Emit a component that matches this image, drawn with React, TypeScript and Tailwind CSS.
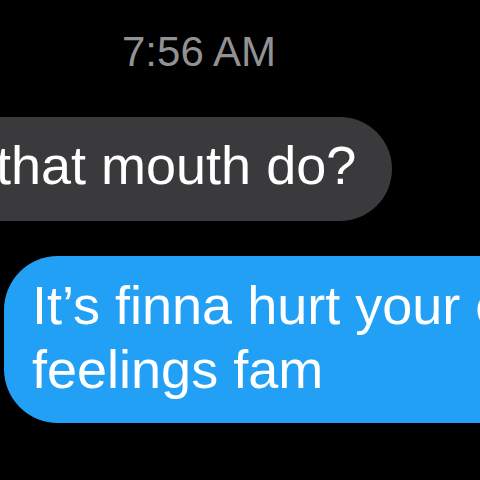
export default function App() {
  return (
    <div
      className="h-[480px] w-[480px] overflow-hidden bg-black"
      style={{ fontFamily: '"Liberation Sans", Arial, sans-serif' }}
    >
      {/* Timestamp */}
      <div className="pl-[122px] pt-[28px] text-[42px] leading-[48px] text-[#929294] whitespace-nowrap">
        7:56 AM
      </div>

      {/* Incoming bubble */}
      <div className="mt-[41px] flex h-[104px] w-[392px] rounded-r-[52px] bg-[#3a3a3c] pt-[18px]">
        <span className="-ml-[4px] text-[54px] leading-[60px] text-white whitespace-nowrap">
          that mouth do?
        </span>
      </div>

      {/* Outgoing bubble */}
      <div className="ml-[4px] mt-[35px] h-[167px] w-[560px] rounded-l-[54px] bg-[#21a0f6] pl-[28px] pt-[17px] text-[54px] leading-[64px] text-white">
        <div className="whitespace-nowrap">It’s finna hurt your c</div>
        <div className="whitespace-nowrap">feelings fam</div>
      </div>
    </div>
  )
}
